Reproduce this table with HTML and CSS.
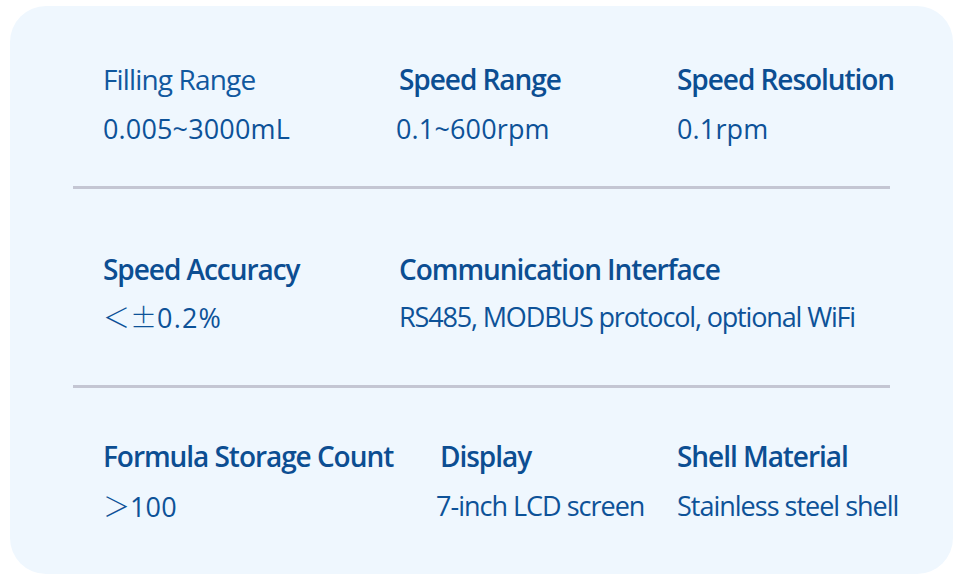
FILE: index.html
```html
<!DOCTYPE html>
<html lang="en">
<head>
<meta charset="utf-8">
<title>Specifications</title>
<link rel="stylesheet" href="styles.css">
</head>
<body>
<div class="card">
  <div class="row row-1">
    <div class="item">
      <div class="label light">Filling Range</div>
      <div class="value wide">0.005~3000mL</div>
    </div>
    <div class="item">
      <div class="label">Speed Range</div>
      <div class="value wide shift">0.1~600rpm</div>
    </div>
    <div class="item">
      <div class="label">Speed Resolution</div>
      <div class="value wide">0.1rpm</div>
    </div>
  </div>
  <div class="divider"></div>
  <div class="row row-2">
    <div class="item">
      <div class="label">Speed Accuracy</div>
      <div class="value wider"><span class="cjk">＜±</span>0.2%</div>
    </div>
    <div class="item item-span">
      <div class="label">Communication Interface</div>
      <div class="value">RS485, MODBUS protocol, optional WiFi</div>
    </div>
  </div>
  <div class="divider"></div>
  <div class="row row-3">
    <div class="item">
      <div class="label">Formula Storage Count</div>
      <div class="value wide"><span class="cjk">＞</span>100</div>
    </div>
    <div class="item">
      <div class="label nudge">Display</div>
      <div class="value loose">7-inch LCD screen</div>
    </div>
    <div class="item">
      <div class="label">Shell Material</div>
      <div class="value loose">Stainless steel shell</div>
    </div>
  </div>
</div>
</body>
</html>
```

FILE: styles.css
```css
* { box-sizing: border-box; }
html, body { margin: 0; padding: 0; background: #ffffff; }
body {
  width: 961px;
  height: 582px;
  padding: 6px 8px 8px 10px;
  font-family: "Open Sans", "Noto Sans", sans-serif;
  color: #0b4f94;
}
.card {
  width: 943px;
  height: 568px;
  background: #eff7fe;
  border-radius: 36px;
  padding: 0 63px;
  display: flex;
  flex-direction: column;
}
.divider {
  height: 3px;
  background: #c4c6d3;
  width: 817px;
}
.row {
  display: grid;
  padding-left: 30px;
}
.row-1 { grid-template-columns: 296px 278px 1fr; padding-top: 53px; padding-bottom: 37px; }
.row-2 { grid-template-columns: 296px 1fr; padding-top: 60px; padding-bottom: 47px; }
.row-3 { grid-template-columns: 333px 241px 1fr; padding-top: 48px; padding-bottom: 0; flex: 1; }
.item { display: flex; flex-direction: column; gap: 10px; }
.row-2 .item { gap: 8px; }
.label {
  font-size: 28px;
  line-height: 40px;
  font-weight: 600;
  letter-spacing: -1.05px;
  white-space: nowrap;
  color: #0c4e92;
}
.label.light { font-weight: 400; color: #11589e; letter-spacing: -0.85px; }
.label.nudge { padding-left: 4px; }
.value {
  font-size: 27px;
  line-height: 40px;
  font-weight: 400;
  letter-spacing: -1.15px;
  white-space: nowrap;
  color: #0d5298;
}
.value.wide { letter-spacing: 0.15px; }
.value.wider { letter-spacing: 1.2px; }
.value.loose { letter-spacing: -1px; }
.value.shift { margin-left: -3px; }
.cjk {
  font-family: "Noto Sans CJK SC", "Noto Sans CJK JP", sans-serif;
  font-weight: 300;
  letter-spacing: 0;
}
```
